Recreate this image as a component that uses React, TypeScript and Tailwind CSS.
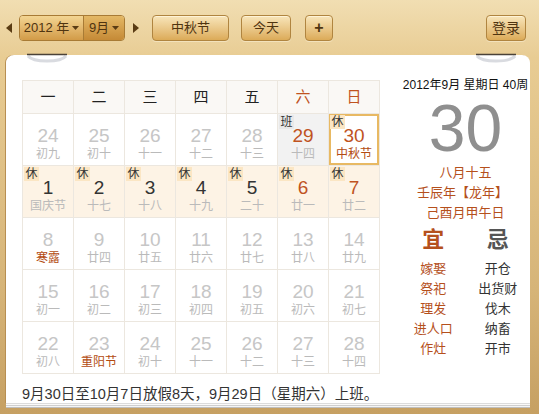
import React from "react";

type Day = {
  n: number;
  sub: string;
  tag?: "休" | "班";
  numColor?: string;
  subColor?: string;
  bg?: string;
  selected?: boolean;
};

const RED = "#c0531f";
const FEST = "#b34b12";
const GREY = "#c6c6c6";
const SUBGREY = "#bababa";

const weeks: Day[][] = [
  [
    { n: 24, sub: "初九" },
    { n: 25, sub: "初十" },
    { n: 26, sub: "十一" },
    { n: 27, sub: "十二" },
    { n: 28, sub: "十三" },
    { n: 29, sub: "十四", tag: "班", numColor: RED, bg: "#f2f2f2" },
    { n: 30, sub: "中秋节", tag: "休", numColor: RED, subColor: FEST, selected: true },
  ],
  [
    { n: 1, sub: "国庆节", tag: "休", numColor: "#333", bg: "#fdf3e5" },
    { n: 2, sub: "十七", tag: "休", numColor: "#333", bg: "#fdf3e5" },
    { n: 3, sub: "十八", tag: "休", numColor: "#333", bg: "#fdf3e5" },
    { n: 4, sub: "十九", tag: "休", numColor: "#333", bg: "#fdf3e5" },
    { n: 5, sub: "二十", tag: "休", numColor: "#333", bg: "#fdf3e5" },
    { n: 6, sub: "廿一", tag: "休", numColor: RED, bg: "#fdf3e5" },
    { n: 7, sub: "廿二", tag: "休", numColor: RED, bg: "#fdf3e5" },
  ],
  [
    { n: 8, sub: "寒露", subColor: FEST },
    { n: 9, sub: "廿四" },
    { n: 10, sub: "廿五" },
    { n: 11, sub: "廿六" },
    { n: 12, sub: "廿七" },
    { n: 13, sub: "廿八" },
    { n: 14, sub: "廿九" },
  ],
  [
    { n: 15, sub: "初一" },
    { n: 16, sub: "初二" },
    { n: 17, sub: "初三" },
    { n: 18, sub: "初四" },
    { n: 19, sub: "初五" },
    { n: 20, sub: "初六" },
    { n: 21, sub: "初七" },
  ],
  [
    { n: 22, sub: "初八" },
    { n: 23, sub: "重阳节", subColor: FEST },
    { n: 24, sub: "初十" },
    { n: 25, sub: "十一" },
    { n: 26, sub: "十二" },
    { n: 27, sub: "十三" },
    { n: 28, sub: "十四" },
  ],
];

const heads = ["一", "二", "三", "四", "五", "六", "日"];

const yi = ["嫁娶", "祭祀", "理发", "进人口", "作灶"];
const ji = ["开仓", "出货财", "伐木", "纳畜", "开市"];

const Arrow = ({ dir }: { dir: "l" | "r" }) => (
  <svg width="6" height="10" viewBox="0 0 6 10">
    <path d={dir === "l" ? "M6 0 L0 5 L6 10 Z" : "M0 0 L6 5 L0 10 Z"} fill="#5a3c14" />
  </svg>
);

const Caret = () => (
  <svg width="7" height="4" viewBox="0 0 7 4" className="ml-[3px]">
    <path d="M0 0 H7 L3.5 4 Z" fill="#5a3c14" />
  </svg>
);

const btn =
  "h-[26px] flex items-center justify-center rounded-[4px] border border-[#b08540] bg-gradient-to-b from-[#f8e6ba] to-[#dcab58] text-[13px] text-[#4f3410] shadow-[inset_0_1px_0_#fff3d6,0_1px_0_#f3e2bc]";

const Ring = () => (
  <svg width="42" height="10" viewBox="0 0 42 10">
    <path d="M2 3 Q6 8 21 8 Q36 8 40 3" fill="none" stroke="#d9dbe0" strokeWidth="3" />
    <path d="M1 1.5 H41" stroke="#4a4238" strokeWidth="1.5" />
  </svg>
);

const Cell = ({ d }: { d: Day }) => (
  <div
    className="relative h-[52px] border-r border-b border-[#ece7df] flex flex-col items-center pt-[12px]"
    style={{
      background: d.bg ?? "#fff",
      boxShadow: d.selected ? "inset 0 0 0 2px #e8b963" : undefined,
    }}
  >
    {d.tag && (
      <span
        className={`absolute top-[1px] left-[1px] w-[15px] h-[14px] text-[12px] leading-[14px] text-center text-[#333] ${
          d.tag === "休" ? "bg-[#fbe6c4]" : "bg-[#e9e9e9]"
        }`}
      >
        {d.tag}
      </span>
    )}
    <span
      className="text-[19px] leading-[20px] font-['Liberation_Sans',sans-serif]"
      style={{ color: d.numColor ?? GREY }}
    >
      {d.n}
    </span>
    <span className="text-[12px] leading-[16px]" style={{ color: d.subColor ?? SUBGREY }}>
      {d.sub}
    </span>
  </div>
);

export default function App() {
  return (
    <div className="relative w-[539px] h-[414px] overflow-hidden bg-[linear-gradient(180deg,#f1deb2_0%,#e8cc93_14%,#d6b478_70%,#c6a062_100%)] font-['Liberation_Sans','Noto_Sans_CJK_SC',sans-serif]">
      {/* toolbar */}
      <div className="h-[55px] flex items-center pl-[6px] pr-[13px] pt-[1px]">
        <Arrow dir="l" />
        <div className="ml-[7px] flex h-[26px] rounded-[4px] border border-[#a87b35] overflow-hidden shadow-[inset_0_1px_0_#fff0c8]">
          <div className="w-[64px] flex items-center justify-center border-r border-[#a87b35] bg-gradient-to-b from-[#f3d592] to-[#d29b47] text-[13px] text-[#4f3410]">
            2012 年<Caret />
          </div>
          <div className="w-[40px] flex items-center justify-center bg-gradient-to-b from-[#e4b865] to-[#c58a36] text-[13px] text-[#4f3410]">
            9月<Caret />
          </div>
        </div>
        <div className="ml-[8px]">
          <Arrow dir="r" />
        </div>
        <div className={`${btn} ml-[13px] w-[77px]`}>中秋节</div>
        <div className={`${btn} ml-[12px] w-[50px]`}>今天</div>
        <div className={`${btn} ml-[14px] w-[28px] text-[16px] font-bold`}>+</div>
        <div className={`${btn} ml-auto w-[40px] text-[14px]`}>登录</div>
      </div>

      {/* paper */}
      <div className="relative ml-[6px] w-[524px] h-[348px] bg-white rounded-t-[8px] shadow-[0_1px_0_#dcdcdc,0_2px_0_#fafafa,0_3px_0_#cfcfcf,0_4px_0_#f5f5f5,0_5px_0_#bfbfbf,-1px_0_0_#b88f52]">
        <div className="absolute top-[-2px] left-[20px]">
          <Ring />
        </div>
        <div className="absolute top-[-2px] left-[469px]">
          <Ring />
        </div>

        <div className="flex">
          <div className="pl-[16px] pt-[25px]">
            <div className="grid grid-cols-[repeat(7,51px)] border-l border-t border-[#ece7df]">
              {heads.map((h, i) => (
                <div
                  key={h}
                  className="h-[33px] flex items-center justify-center border-r border-b border-[#ece7df] bg-[#faf8f5] text-[15px]"
                  style={{ color: i >= 5 ? RED : "#222" }}
                >
                  {h}
                </div>
              ))}
              {weeks.flat().map((d, i) => (
                <Cell key={i} d={d} />
              ))}
            </div>
            <p className="mt-[10px] text-[14.5px] leading-[20px] text-[#333] whitespace-nowrap">
              9月30日至10月7日放假8天，9月29日（星期六）上班。
            </p>
          </div>

          <div className="ml-[21px] w-[130px] pt-[22px] flex flex-col items-center">
            <div className="text-[12px] leading-[16px] text-[#111] whitespace-nowrap">
              2012年9月 星期日 40周
            </div>
            <div className="mt-[2px] text-[66px] leading-[66px] text-[#8f8f8f]">30</div>
            <div className="mt-[2px] text-[13px] leading-[20px] text-[#b5501c] text-center">
              <div>八月十五</div>
              <div className="-ml-[6px]">壬辰年【龙年】</div>
              <div>己酉月甲午日</div>
            </div>
            <div className="w-full grid grid-cols-2 h-[28px] items-center text-[22px] font-bold text-center">
              <span className="text-[#b5501c]">宜</span>
              <span className="text-[#555]">忌</span>
            </div>
            <div className="mt-[8px] w-full grid grid-cols-2 text-[13px] leading-[20px] text-center">
              <div className="text-[#b5501c]">
                {yi.map((t) => (
                  <div key={t}>{t}</div>
                ))}
              </div>
              <div className="text-[#333]">
                {ji.map((t) => (
                  <div key={t}>{t}</div>
                ))}
              </div>
            </div>
          </div>
        </div>
      </div>
    </div>
  );
}
